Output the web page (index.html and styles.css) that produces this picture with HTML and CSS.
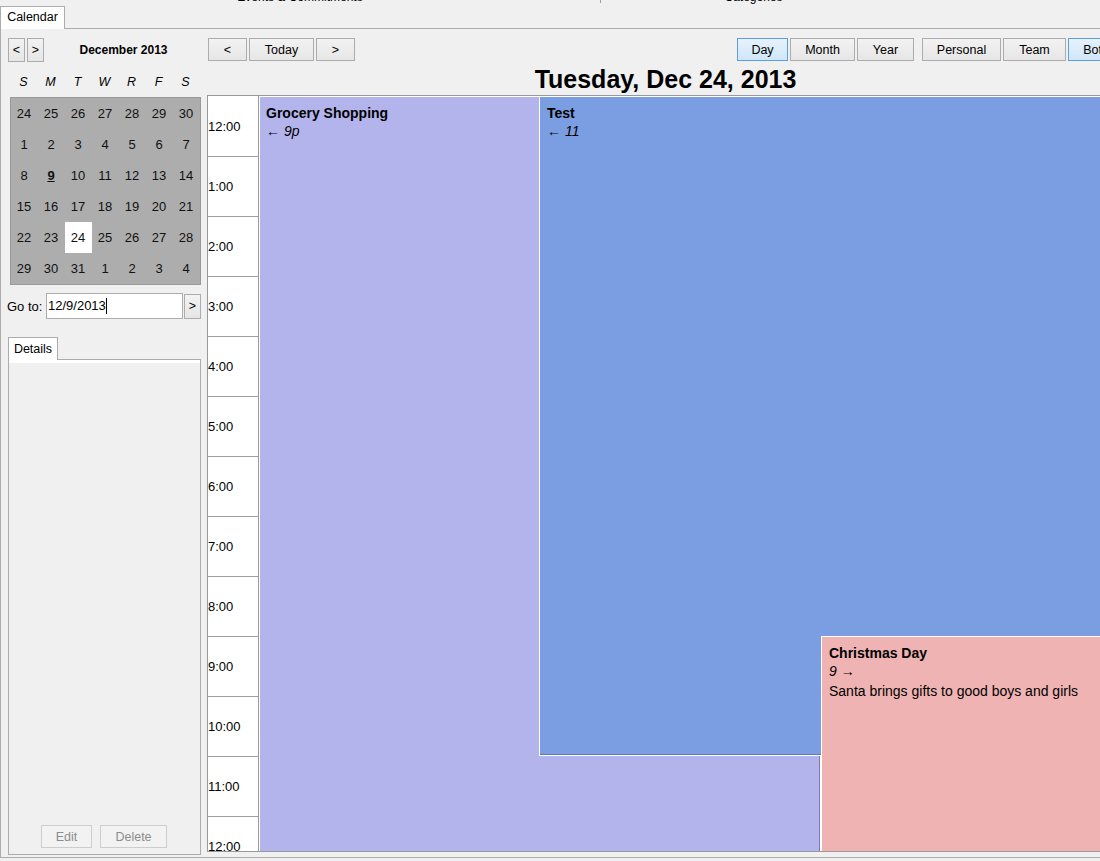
FILE: index.html
```html
<!DOCTYPE html>
<html>
<head>
<meta charset="utf-8">
<title>Calendar</title>
<link rel="stylesheet" href="styles.css">
</head>
<body>
<div class="app">
  <div class="topstrip">
    <span class="ts-left">Events &amp; Commitments</span>
    <span class="ts-sep"></span>
    <span class="ts-right">Categories</span>
  </div>
  <div class="tabbar">
    <div class="tab maintab">Calendar</div>
    <div class="tabfill"></div>
  </div>
  <div class="tabpanel">
    <div class="leftcol">
      <div class="minnav">
        <button class="btn navsq">&lt;</button>
        <button class="btn navsq">&gt;</button>
        <div class="month">December 2013</div>
      </div>
      <div class="dow">
        <span>S</span><span>M</span><span>T</span><span>W</span><span>R</span><span>F</span><span>S</span>
      </div>
      <div class="mgrid">
        <span>24</span><span>25</span><span>26</span><span>27</span><span>28</span><span>29</span><span>30</span>
        <span>1</span><span>2</span><span>3</span><span>4</span><span>5</span><span>6</span><span>7</span>
        <span>8</span><span class="today">9</span><span>10</span><span>11</span><span>12</span><span>13</span><span>14</span>
        <span>15</span><span>16</span><span>17</span><span>18</span><span>19</span><span>20</span><span>21</span>
        <span>22</span><span>23</span><span class="selday">24</span><span>25</span><span>26</span><span>27</span><span>28</span>
        <span>29</span><span>30</span><span>31</span><span>1</span><span>2</span><span>3</span><span>4</span>
      </div>
      <div class="goto">
        <span class="gotolabel">Go to:</span>
        <div class="gotoinput">12/9/2013<span class="caret"></span></div>
        <button class="btn gobtn">&gt;</button>
      </div>
      <div class="dtabs">
        <div class="tab dtab">Details</div>
      </div>
      <div class="dpanel">
        <div class="dbtns">
          <button class="btn dis editbtn">Edit</button>
          <button class="btn dis delbtn">Delete</button>
        </div>
      </div>
    </div>
    <div class="rightcol">
      <div class="toolbar">
        <div class="grp">
          <button class="btn tb w39">&lt;</button>
          <button class="btn tb w65">Today</button>
          <button class="btn tb w39">&gt;</button>
        </div>
        <div class="grp">
          <button class="btn tb sel w51">Day</button>
          <button class="btn tb w65">Month</button>
          <button class="btn tb w57">Year</button>
          <span class="grpgap"></span>
          <button class="btn tb w79">Personal</button>
          <button class="btn tb w63">Team</button>
          <button class="btn tb sel w56">Both</button>
        </div>
      </div>
      <h1 class="title">Tuesday, Dec 24, 2013</h1>
      <div class="dayview">
        <div class="times">
          <div class="hour">12:00</div>
          <div class="hour">1:00</div>
          <div class="hour">2:00</div>
          <div class="hour">3:00</div>
          <div class="hour">4:00</div>
          <div class="hour">5:00</div>
          <div class="hour">6:00</div>
          <div class="hour">7:00</div>
          <div class="hour">8:00</div>
          <div class="hour">9:00</div>
          <div class="hour">10:00</div>
          <div class="hour">11:00</div>
          <div class="hour">12:00</div>
        </div>
        <div class="events">
          <div class="event grocery">
            <div class="ev-title">Grocery Shopping</div>
            <div class="ev-time">← 9p</div>
          </div>
          <div class="event test">
            <div class="ev-title">Test</div>
            <div class="ev-time">← 11</div>
          </div>
          <div class="event xmas">
            <div class="ev-title">Christmas Day</div>
            <div class="ev-time">9 →</div>
            <div class="ev-desc">Santa brings gifts to good boys and girls</div>
          </div>
        </div>
      </div>
    </div>
  </div>
</div>
</body>
</html>
```

FILE: styles.css
```css
* {
  box-sizing: border-box;
}

html, body {
  margin: 0;
  padding: 0;
  overflow: hidden;
  background: #f0f0f0;
}

body {
  width: 1100px;
  height: 861px;
  font-family: "Liberation Sans", Arial, sans-serif;
  font-size: 12.5px;
  color: #000;
}

.app {
  width: 1124px;
  height: 861px;
}

/* clipped strip from the panel above */
.topstrip {
  height: 6px;
  overflow: hidden;
  display: flex;
  align-items: flex-start;
}

.ts-left,
.ts-right {
  display: block;
  font-size: 12px;
  line-height: 12px;
  margin-top: -9px;
  text-align: center;
}

.ts-left {
  width: 600px;
}

.ts-sep {
  width: 1px;
  height: 3px;
  background: #a0a0a0;
}

.ts-right {
  width: 305px;
}

/* tabs */
.tabbar {
  display: flex;
  height: 23px;
}

.tab {
  background: #fff;
  border: 1px solid #acacac;
  border-bottom: none;
  padding: 0 4px;
  line-height: 21px;
}

.maintab {
  width: 65px;
  height: 23px;
  text-align: center;
  padding: 0;
}

.tabfill {
  flex: 1;
  border-bottom: 1px solid #acacac;
}

.tabpanel {
  display: flex;
  gap: 6px;
  height: 829px;
  border: 1px solid #acacac;
  border-top: none;
  padding: 9px 0 0 6px;
}

/* left column */
.leftcol {
  width: 194px;
  flex: none;
  display: flex;
  flex-direction: column;
}

.btn {
  font-family: "Liberation Sans", Arial, sans-serif;
  font-size: 12.5px;
  color: #000;
  border: 1px solid #acacac;
  background: linear-gradient(#f2f2f2, #e6e6e6);
  padding: 0;
  margin: 0;
  border-radius: 0;
}

.minnav {
  display: flex;
  align-items: center;
  height: 24px;
  padding-left: 1px;
}

.navsq {
  width: 17px;
  height: 24px;
  margin-right: 2px;
}

.month {
  flex: 1;
  text-align: center;
  font-weight: bold;
  font-size: 12px;
}

.dow {
  display: grid;
  grid-template-columns: repeat(7, 27px);
  margin: 10px 0 5px 3px;
  height: 20px;
  line-height: 20px;
  font-style: italic;
  font-size: 12.5px;
  text-align: center;
}

.mgrid {
  display: grid;
  grid-template-columns: repeat(7, 27px);
  grid-auto-rows: 31px;
  width: 191px;
  margin-left: 3px;
  border: 1px solid #999;
  background: #adadad;
  font-size: 13px;
}

.mgrid span {
  display: flex;
  align-items: center;
  justify-content: center;
  color: #111;
  padding-right: 1px;
}

.mgrid .today {
  font-weight: bold;
  text-decoration: underline;
}

.mgrid .selday {
  background: #fff;
}

.goto {
  display: flex;
  align-items: center;
  margin-top: 8px;
  height: 26px;
}

.gotolabel {
  width: 39px;
  font-size: 13px;
}

.gotoinput {
  width: 137px;
  height: 26px;
  background: #fff;
  border: 1px solid #acacac;
  font-size: 13px;
  line-height: 24px;
  padding-left: 1px;
  display: flex;
  align-items: center;
}

.caret {
  width: 1px;
  height: 16px;
  background: #000;
}

.gobtn {
  width: 17px;
  height: 25px;
  margin-left: 1px;
}

.dtabs {
  display: flex;
  margin-top: 18px;
  padding-left: 1px;
}

.dtab {
  position: relative;
  z-index: 1;
  width: 50px;
  height: 23px;
  margin-bottom: -1px;
  padding: 0;
  text-align: center;
  line-height: 22px;
}

.dpanel {
  margin-left: 1px;
  width: 193px;
  height: 496px;
  border: 1px solid #acacac;
  background: #f0f0f0;
  box-shadow: inset 0 3px 0 #fff;
  display: flex;
  flex-direction: column;
  justify-content: flex-end;
  padding-bottom: 6px;
}

.dbtns {
  display: flex;
  justify-content: center;
  gap: 8px;
  padding-right: 1px;
}

.dis {
  height: 23px;
  color: #8c8c8c;
  border-color: #cdcdcd;
  background: #f2f2f2;
}

.editbtn {
  width: 51px;
}

.delbtn {
  width: 67px;
}

/* right column */
.rightcol {
  width: 917px;
  flex: none;
  display: flex;
  flex-direction: column;
}

.toolbar {
  display: flex;
  justify-content: space-between;
  height: 23px;
  padding-left: 1px;
}

.grp {
  display: flex;
  gap: 2px;
}

.grpgap {
  width: 4px;
}

.tb {
  height: 23px;
}

.sel {
  border-color: #5c9ee0;
  background: linear-gradient(#e6f2fc, #cfe6f9);
}

.w39 { width: 39px; }
.w51 { width: 51px; }
.w56 { width: 56px; }
.w57 { width: 57px; }
.w63 { width: 63px; }
.w65 { width: 65px; }
.w79 { width: 79px; }

.title {
  margin: 0;
  height: 34px;
  padding-top: 2px;
  font-size: 25px;
  line-height: 32px;
  font-weight: bold;
  text-align: center;
}

.dayview {
  display: flex;
  height: 757px;
  border: 1px solid #999;
  border-right: none;
  overflow: hidden;
  background: #f0f0f0;
}

.times {
  width: 51px;
  flex: none;
  background: #fff;
  border-right: 1px solid #999;
  padding-top: 1px;
}

.hour {
  height: 60px;
  border-bottom: 1px solid #a0a0a0;
  line-height: 59px;
  font-size: 13px;
  white-space: nowrap;
}

.events {
  flex: 1;
  position: relative;
}

.event {
  position: absolute;
  border: 1px solid #fff;
  padding: 7px 0 0 7px;
  font-size: 14px;
  line-height: 18px;
  color: #000;
}

.ev-title {
  font-weight: bold;
}

.ev-time {
  font-style: italic;
}

.ev-desc {
  margin-top: 2px;
}

.grocery {
  left: 0;
  top: 0;
  width: 562px;
  height: 900px;
  padding-left: 6px;
  background: #b4b4ec;
  box-shadow: inset -1px 0 0 #7a7ab0;
}

.test {
  left: 280px;
  top: 0;
  right: 0;
  height: 660px;
  background: #7b9de2;
  box-shadow: inset 0 -1px 0 #5d78b8;
}

.xmas {
  left: 562px;
  top: 540px;
  right: 0;
  height: 400px;
  background: #efb3b3;
}
```
